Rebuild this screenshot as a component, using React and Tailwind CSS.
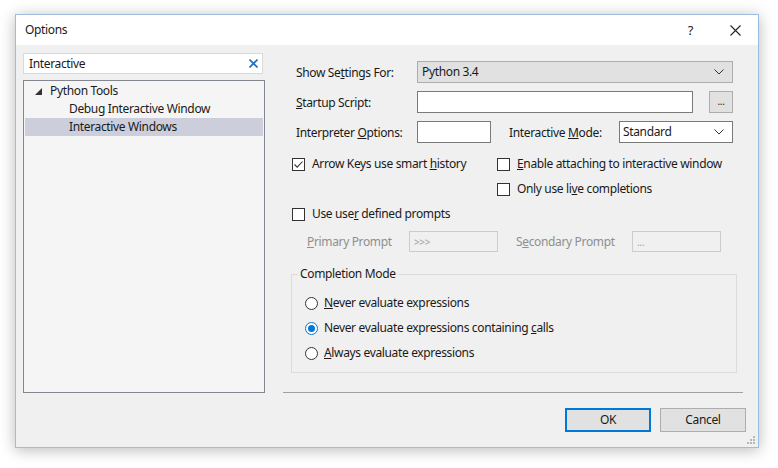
// App.jsx - Options dialog (Python Tools > Interactive Windows)
const font = { fontFamily: '"Noto Sans", "Open Sans", sans-serif' }

function Chevron({ className = '' }) {
  return (
    <svg width="10" height="6" viewBox="0 0 10 6" className={className}>
      <path d="M0.5 0.5 L5 5 L9.5 0.5" fill="none" stroke="#333" strokeWidth="1" />
    </svg>
  )
}

function CheckBox({ checked, children }) {
  return (
    <div className="flex items-center h-[16px]">
      <span className="w-[13px] h-[13px] border border-[#333] bg-white flex items-center justify-center shrink-0">
        {checked && (
          <svg width="11" height="11" viewBox="0 0 11 11">
            <path d="M1.5 5.5 L4.2 8.2 L9.5 2.5" fill="none" stroke="#333" strokeWidth="1.1" />
          </svg>
        )}
      </span>
      <span className="ml-[7px] text-[#1a1a1a]">{children}</span>
    </div>
  )
}

function Radio({ checked, children }) {
  return (
    <div className="flex items-center h-[16px]">
      <span
        className={
          checked
            ? 'w-[13px] h-[13px] rounded-full border border-[#0078d7] bg-white flex items-center justify-center shrink-0'
            : 'w-[13px] h-[13px] rounded-full border border-[#333] bg-white shrink-0'
        }
      >
        {checked && <span className="w-[7px] h-[7px] rounded-full bg-[#0078d7]" />}
      </span>
      <span className="ml-[6px] text-[#1a1a1a]">{children}</span>
    </div>
  )
}

export default function App() {
  return (
    <div className="w-[778px] h-[468px] bg-white pt-[14px] pl-[15px] text-[12px] leading-none tracking-[-0.35px]" style={font}>
      {/* 창 본체 */}
      <div className="relative w-[744px] h-[434px] border border-[#9dbde0] bg-[#f0f0f0] shadow-[0_2px_14px_rgba(0,0,0,0.28)] flex flex-col">
        {/* 타이틀 바 */}
        <div className="h-[30px] bg-white flex items-center pl-[9px] text-[#1a1a1a]">
          <span>Options</span>
          <span className="ml-auto mr-[37px] text-[13px] text-[#222]">?</span>
          <svg width="11" height="11" viewBox="0 0 11 11" className="mr-[17px]">
            <path d="M0.5 0.5 L10.5 10.5 M10.5 0.5 L0.5 10.5" stroke="#222" strokeWidth="1.1" />
          </svg>
        </div>

        <div className="flex flex-1">
          {/* 왼쪽: 검색 + 트리 */}
          <div className="w-[250px] pl-[7px] pt-[8px]">
            <div className="w-[240px] h-[21px] bg-white border border-[#d9d9d9] flex items-center pl-[5px] pr-[4px]">
              <span className="text-[#1a1a1a]">Interactive</span>
              <svg width="9" height="9" viewBox="0 0 9 9" className="ml-auto">
                <path d="M0.5 0.5 L8.5 8.5 M8.5 0.5 L0.5 8.5" stroke="#1e6fc8" strokeWidth="1.6" />
              </svg>
            </div>
            <div className="mt-[6px] w-[242px] h-[313px] border border-[#828790] bg-[#f5f5f5] pt-[1px] px-[1px]">
              <div className="h-[18px] flex items-center pl-[10px] text-[#1a1a1a]">
                <svg width="7" height="7" viewBox="0 0 7 7">
                  <path d="M7 0 L7 7 L0 7 Z" fill="#333" />
                </svg>
                <span className="ml-[8px]">Python Tools</span>
              </div>
              <div className="h-[18px] flex items-center pl-[44px] text-[#1a1a1a]">Debug Interactive Window</div>
              <div className="h-[18px] flex items-center pl-[44px] bg-[#cccedb] text-[#1a1a1a]">Interactive Windows</div>
            </div>
          </div>

          {/* 오른쪽: 설정 */}
          <div className="flex-1 pl-[26px] pt-[16px] pr-[12px] text-[#1a1a1a]">
            <div className="flex items-center h-[22px] ml-[4px]">
              <span className="w-[121px] pt-[1px]">Show Se<u>t</u>tings For:</span>
              <div className="w-[316px] h-[22px] bg-[#e1e1e1] border border-[#adadad] flex items-center pl-[4px] pr-[8px]">
                <span>Python 3.4</span>
                <Chevron className="ml-auto" />
              </div>
            </div>
            <div className="flex items-center h-[22px] ml-[4px] mt-[8px]">
              <span className="w-[121px] pt-[1px]"><u>S</u>tartup Script:</span>
              <div className="w-[276px] h-[22px] bg-white border border-[#7a7a7a]" />
              <div className="ml-[16px] w-[24px] h-[22px] bg-[#e1e1e1] border border-[#adadad] flex items-center justify-center text-[10px] pb-[2px]">...</div>
            </div>
            <div className="flex items-center h-[22px] ml-[4px] mt-[8px]">
              <span className="w-[121px] pt-[1px]">Interpreter <u>O</u>ptions:</span>
              <div className="w-[74px] h-[22px] bg-white border border-[#7a7a7a]" />
              <span className="ml-[18px] w-[110px] pt-[1px]">Interactive <u>M</u>ode:</span>
              <div className="w-[114px] h-[22px] bg-white border border-[#7a7a7a] flex items-center pl-[3px] pr-[8px]">
                <span>Standard</span>
                <Chevron className="ml-auto" />
              </div>
            </div>

            <div className="flex mt-[13px]">
              <div className="w-[205px]">
                <CheckBox checked>Arrow Keys use smart <u>h</u>istory</CheckBox>
              </div>
              <div>
                <CheckBox><u>E</u>nable attaching to interactive window</CheckBox>
                <div className="mt-[9px]">
                  <CheckBox>Only use li<u>v</u>e completions</CheckBox>
                </div>
              </div>
            </div>
            <div className="mt-[9px]">
              <CheckBox>Use use<u>r</u> defined prompts</CheckBox>
            </div>

            <div className="flex items-center h-[21px] mt-[9px] ml-[15px] text-[#8f8f8f]">
              <span className="w-[102px]"><u>P</u>rimary Prompt</span>
              <div className="w-[89px] h-[21px] border border-[#cccccc] flex items-center pl-[4px] text-[10px] text-[#a0a0a0]">&gt;&gt;&gt;</div>
              <span className="ml-[18px] w-[116px]">S<u>e</u>condary Prompt</span>
              <div className="w-[89px] h-[21px] border border-[#cccccc] flex items-center pl-[4px] text-[10px] text-[#a0a0a0]">...</div>
            </div>

            {/* 그룹 박스 */}
            <div className="relative mt-[22px] ml-[-1px] w-[446px] h-[99px] border border-[#dcdcdc] pt-[20px] pl-[13px]">
              <span className="absolute top-[-7px] left-[6px] px-[2px] bg-[#f0f0f0]">Completion Mode</span>
              <Radio><u>N</u>ever evaluate expressions</Radio>
              <div className="mt-[9px]">
                <Radio checked>Never evaluate expressions containing <u>c</u>alls</Radio>
              </div>
              <div className="mt-[9px]">
                <Radio><u>A</u>lways evaluate expressions</Radio>
              </div>
            </div>

            <div className="mt-[19px] ml-[-9px] w-[460px] h-px bg-[#a0a0a0]" />

            <div className="flex justify-end mt-[15px]">
              <div className="w-[86px] h-[24px] bg-[#e1e1e1] border-2 border-[#0078d7] flex items-center justify-center">OK</div>
              <div className="ml-[9px] w-[86px] h-[24px] bg-[#e1e1e1] border border-[#adadad] flex items-center justify-center">Cancel</div>
            </div>
          </div>
        </div>

        {/* 크기 조절 그립 */}
        <svg width="8" height="8" viewBox="0 0 8 8" className="absolute right-[3px] bottom-[3px]">
          <rect x="6" y="0" width="2" height="2" fill="#b8b8b8" />
          <rect x="3" y="3" width="2" height="2" fill="#b8b8b8" />
          <rect x="6" y="3" width="2" height="2" fill="#b8b8b8" />
          <rect x="0" y="6" width="2" height="2" fill="#b8b8b8" />
          <rect x="3" y="6" width="2" height="2" fill="#b8b8b8" />
          <rect x="6" y="6" width="2" height="2" fill="#b8b8b8" />
        </svg>
      </div>
    </div>
  )
}
